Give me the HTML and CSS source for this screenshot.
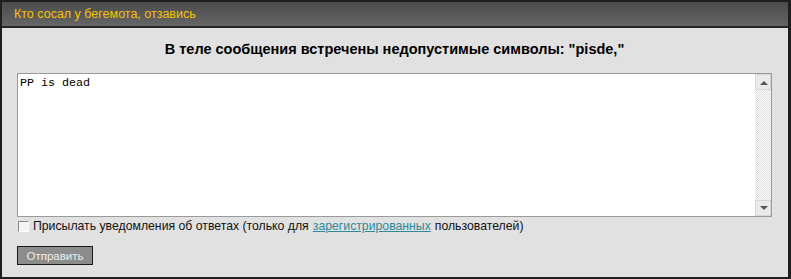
FILE: index.html
```html
<!DOCTYPE html>
<html lang="ru">
<head>
	<meta charset="UTF-8">
	<title>Кто сосал у бегемота, отзависть</title>
	<link rel="stylesheet" href="styles.css">
</head>
<body>
	<div class="panel">
		<div class="panel-head">Кто сосал у бегемота, отзавись</div>
		<div class="panel-body">
			<h2 class="error">В теле сообщения встречены недопустимые символы: "pisde,"</h2>
			<div class="editor">
				<textarea class="message" spellcheck="false">PP is dead</textarea>
				<div class="scroll">
					<span class="scroll-btn up"></span>
					<span class="scroll-track"></span>
					<span class="scroll-btn down"></span>
				</div>
			</div>
			<label class="notify">
				<span class="check"></span>
				Присылать уведомления об ответах (только для <a href="#">зарегистрированных</a> пользователей)
			</label>
			<div class="actions">
				<button class="send">Отправить</button>
			</div>
		</div>
	</div>
</body>
</html>
```
FILE: styles.css
```css
html,body{margin:0;padding:0;background:#1e1e1e;}
body{font:12px/1.2 "Liberation Sans",Arial,sans-serif;color:#111;}
.panel{width:786px;height:275px;border:2px solid #1e1e1e;border-right-width:3px;display:flex;flex-direction:column;background:#e1e1e1;}
.panel-head{height:24px;line-height:24px;padding-left:12px;color:#f5c400;font-size:12.5px;background:linear-gradient(#4c4c4c,#656565);border-bottom:2px solid #262626;}
.panel-body{flex:1;padding:0 16px 0 15px;}
.error{margin:12px 0 0;font-size:14.5px;font-weight:bold;text-align:center;color:#000;height:19px;line-height:19px;}
.editor{display:flex;margin-top:14px;height:142px;border:1px solid #9a9a9a;background:#fff;}
.message{flex:1;border:none;outline:none;resize:none;margin:0;padding:3px 2px;font:11.7px/13px "Liberation Mono","Courier New",monospace;color:#000;background:#fff;}
.scroll{width:16px;display:flex;flex-direction:column;background:repeating-conic-gradient(#dcdcdc 0 25%,#fff 0 50%) 0 0/2px 2px;}
.scroll-btn{height:16px;background:#eaeaea;border:1px solid #d6d6d6;box-sizing:border-box;position:relative;}
.scroll-track{flex:1;}
.scroll-btn:after{content:"";position:absolute;left:4px;border-left:4px solid transparent;border-right:4px solid transparent;}
.up:after{top:6px;border-bottom:4px solid #555;}
.down:after{top:5px;border-top:4px solid #555;}
.notify{display:flex;align-items:center;gap:4px;margin-top:2px;height:14px;font-size:12.25px;}
.check{width:11px;height:11px;border:1px solid #8a8a8a;border-right-color:#fff;border-bottom-color:#fff;background:#f4f4f4;box-sizing:border-box;margin-left:1px;}
.notify a{color:#2e8a98;}
.actions{margin-top:13px;}
.send{width:76px;height:19px;padding:0;border:1px solid #1a1a1a;background:#8c8c8c;color:#ececec;font:11.5px "Liberation Sans",Arial,sans-serif;}
```
